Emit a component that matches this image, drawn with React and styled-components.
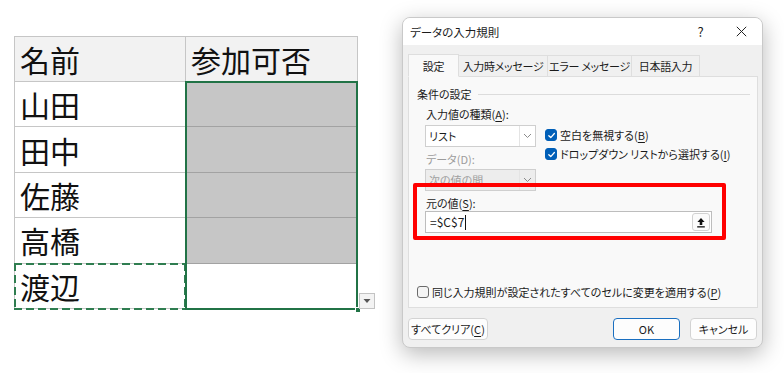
import React from "react";
import styled, { createGlobalStyle } from "styled-components";

const GlobalStyle = createGlobalStyle`
    html, body {
        margin: 0;
        padding: 0;
        background: #ffffff;
    }
    body {
        font-family: "Noto Sans CJK JP", "Noto Sans", sans-serif;
        color: #1a1a1a;
    }
    * {
        box-sizing: border-box;
    }
`

const Page = styled.div`
    display: flex;
    align-items: flex-start;
    width: 784px;
    height: 373px;
    overflow: hidden;
`

/* ---------- spreadsheet ---------- */

const Sheet = styled.div`
    position: relative;
    margin: 36px 0 0 14px;
    display: grid;
    grid-template-columns: 171px 172px;
    grid-template-rows: 45px repeat(5, 45.4px);
    border-top: 1px solid #c6c6c6;
    border-left: 1px solid #c6c6c6;
`

const Cell = styled.div`
    display: flex;
    align-items: center;
    padding-left: 5px;
    font-size: 30px;
    line-height: 1;
    color: #111;
    background: ${p => p.$head ? "#f2f2f2" : p.$shade ? "#c6c6c6" : "#ffffff"};
    border-right: 1px solid #c6c6c6;
    border-bottom: 1px solid ${p => p.$shade ? "#a2a2a2" : "#c6c6c6"};
`

const Selection = styled.div`
    position: absolute;
    left: 170px;
    top: 44px;
    width: 173px;
    height: 229px;
    border: 2px solid #217346;
    pointer-events: none;
`

const Handle = styled.div`
    position: absolute;
    right: -5px;
    bottom: -5px;
    width: 6px;
    height: 6px;
    background: #217346;
    border: 1px solid #ffffff;
`

const CopyMarquee = styled.div`
    position: absolute;
    left: -1px;
    top: 226px;
    width: 172px;
    height: 47px;
    pointer-events: none;
    background:
        repeating-linear-gradient(90deg, #2f7d50 0 8px, transparent 8px 12px) top / 100% 2px no-repeat,
        repeating-linear-gradient(90deg, #2f7d50 0 8px, transparent 8px 12px) bottom / 100% 2px no-repeat,
        repeating-linear-gradient(180deg, #2f7d50 0 8px, transparent 8px 12px) left / 2px 100% no-repeat,
        repeating-linear-gradient(180deg, #2f7d50 0 8px, transparent 8px 12px) right / 2px 100% no-repeat;
`

const ListButton = styled.div`
    position: absolute;
    left: 344px;
    top: 256px;
    width: 16px;
    height: 16px;
    display: flex;
    align-items: center;
    justify-content: center;
    background: #f3f3f3;
    border: 1px solid #c3c3c3;
`

/* ---------- dialog ---------- */

const Dialog = styled.div`
    margin: 17px 0 0 44px;
    width: 361px;
    height: 331px;
    display: flex;
    flex-direction: column;
    background: #f0f0f0;
    border: 1px solid #c9c9c9;
    border-radius: 8px;
    overflow: hidden;
    box-shadow: 0 6px 22px rgba(0, 0, 0, 0.28);
    font-size: 11px;
    font-feature-settings: "palt";
    line-height: 14px;
    color: #1b1b1b;
    white-space: nowrap;

    u {
        text-underline-offset: 2px;
    }
`

const TitleBar = styled.div`
    height: 27px;
    flex: none;
    display: flex;
    align-items: center;
    padding-left: 7px;
    background: #ffffff;
    font-size: 11.5px;
`

const TitleText = styled.span`
    flex: 1;
`

const TitleButton = styled.span`
    width: 41px;
    display: flex;
    align-items: center;
    justify-content: center;
    font-size: 13px;
`

const Body = styled.div`
    flex: 1;
    display: flex;
    flex-direction: column;
    padding: 10px 5px 0 5px;
`

const TabRow = styled.div`
    display: flex;
    height: 21px;
    align-items: flex-end;
`

const Tab = styled.div`
    height: ${p => p.$active ? "23px" : "21px"};
    width: ${p => p.$w}px;
    display: flex;
    align-items: center;
    justify-content: center;
    letter-spacing: -0.3px;
    background: ${p => p.$active ? "#f9f9f9" : "#f0f0f0"};
    border: 1px solid #dedede;
    border-bottom: ${p => p.$active ? "1px solid #f9f9f9" : "none"};
    margin-right: -1px;
    position: relative;
    z-index: ${p => p.$active ? 2 : 1};
    margin-bottom: ${p => p.$active ? "-1px" : "0"};
`

const Panel = styled.div`
    position: relative;
    height: 232px;
    width: 350px;
    display: flex;
    flex-direction: column;
    padding: 10px 0 8px 8px;
    background: #f9f9f9;
    border: 1px solid #dedede;
`

const Legend = styled.div`
    display: flex;
    align-items: center;
    gap: 6px;
    padding-right: 7px;

    &::after {
        content: "";
        flex: 1;
        height: 1px;
        background: #dcdcdc;
    }
`

const Group = styled.div`
    display: flex;
    flex-direction: column;
    padding-left: 8px;
`

const Label = styled.div`
    margin-top: ${p => p.$mt}px;
    color: ${p => p.$disabled ? "#9c9c9c" : "#1b1b1b"};
    padding-left: 1px;
`

const Row = styled.div`
    display: flex;
    align-items: flex-start;
    margin-top: 4px;
    gap: 9px;
`

const Select = styled.div`
    width: 111px;
    height: 22px;
    display: flex;
    align-items: center;
    background: ${p => p.$disabled ? "#ededed" : "#ffffff"};
    color: ${p => p.$disabled ? "#a0a0a0" : "#1b1b1b"};
    border: 1px solid #cfcfcf;
    margin-top: ${p => p.$mt || 0}px;
`

const SelectText = styled.span`
    flex: 1;
    padding-left: 3px;
`

const Chevron = styled.span`
    width: 16px;
    height: 100%;
    display: flex;
    align-items: center;
    justify-content: center;
    border-left: 1px solid #e4e4e4;
`

const Checks = styled.div`
    display: flex;
    flex-direction: column;
    gap: 5px;
    padding-top: 3px;
`

const CheckRow = styled.label`
    display: flex;
    align-items: center;
    gap: 3px;
`

const Box = styled.span`
    width: 12px;
    height: 12px;
    flex: none;
    display: flex;
    align-items: center;
    justify-content: center;
    border-radius: 3px;
    background: ${p => p.$checked ? "#005fb8" : "#f4f4f4"};
    border: 1px solid ${p => p.$checked ? "#005fb8" : "#6b6b6b"};
`

const SourceInput = styled.div`
    margin-top: 1px;
    width: 287px;
    height: 22px;
    display: flex;
    align-items: center;
    padding: 0 1px 0 4px;
    background: #ffffff;
    border: 1px solid #bdbdbd;
    font-size: 12px;
`

const Caret = styled.span`
    width: 1px;
    height: 15px;
    margin-left: 1px;
    background: #111;
`

const Grow = styled.span`
    flex: 1;
`

const RefButton = styled.span`
    width: 18px;
    height: 18px;
    display: flex;
    align-items: center;
    justify-content: center;
    background: #fbfbfb;
    border: 1px solid #d2d2d2;
    border-radius: 3px;
`

const RedMark = styled.div`
    position: absolute;
    left: 4px;
    top: 106px;
    width: 313px;
    height: 57px;
    border: 4px solid #ff0000;
    border-radius: 2px;
    pointer-events: none;
`

const Footer = styled.div`
    display: flex;
    align-items: center;
    margin-top: 10px;
    gap: 10px;
`

const Button = styled.div`
    height: 22px;
    width: ${p => p.$w}px;
    display: flex;
    align-items: center;
    justify-content: center;
    background: #fdfdfd;
    border: 1px solid ${p => p.$primary ? "#1a6fc0" : "#d3d3d3"};
    border-radius: 4px;
    margin-left: ${p => p.$push ? "auto" : "0"};
`

const Check = () => (
    <svg width="9" height="9" viewBox="0 0 10 10">
        <path d="M2 5.2 L4.2 7.3 L8.2 2.8" fill="none" stroke="#fff" strokeWidth="1.4" strokeLinecap="round" strokeLinejoin="round" />
    </svg>
)

const ChevronIcon = () => (
    <svg width="9" height="6" viewBox="0 0 9 6">
        <path d="M1 1 L4.5 4.5 L8 1" fill="none" stroke="#8a8a8a" strokeWidth="1" />
    </svg>
)

export default function App() {
    const names = ["山田", "田中", "佐藤", "高橋", "渡辺"];
    const tabs = [
        { label: "設定", w: 51, active: true },
        { label: "入力時メッセージ", w: 90 },
        { label: "エラー メッセージ", w: 85 },
        { label: "日本語入力", w: 69 },
    ];

    return (
        <Page>
            <GlobalStyle />
            <Sheet>
                <Cell $head>名前</Cell>
                <Cell $head>参加可否</Cell>
                {names.map((n, i) => (
                    <React.Fragment key={n}>
                        <Cell>{n}</Cell>
                        <Cell $shade={i < 4} />
                    </React.Fragment>
                ))}
                <CopyMarquee />
                <Selection>
                    <Handle />
                </Selection>
                <ListButton>
                    <svg width="8" height="6" viewBox="0 0 8 6">
                        <path d="M0.5 1 H7.5 L4 5 Z" fill="#555" />
                    </svg>
                </ListButton>
            </Sheet>

            <Dialog>
                <TitleBar>
                    <TitleText>データの入力規則</TitleText>
                    <TitleButton>?</TitleButton>
                    <TitleButton>
                        <svg width="11" height="11" viewBox="0 0 11 11">
                            <path d="M0.8 0.8 L10.2 10.2 M10.2 0.8 L0.8 10.2" stroke="#222" strokeWidth="1" />
                        </svg>
                    </TitleButton>
                </TitleBar>
                <Body>
                    <TabRow>
                        {tabs.map(t => (
                            <Tab key={t.label} $w={t.w} $active={t.active}>{t.label}</Tab>
                        ))}
                    </TabRow>
                    <Panel>
                        <Legend>条件の設定</Legend>
                        <Group>
                            <Label $mt={6}>入力値の種類(<u>A</u>):</Label>
                            <Row>
                                <div>
                                    <Select>
                                        <SelectText>リスト</SelectText>
                                        <Chevron><ChevronIcon /></Chevron>
                                    </Select>
                                    <Label $mt={5} $disabled>データ(D):</Label>
                                    <Select $mt={3} $disabled>
                                        <SelectText>次の値の間</SelectText>
                                        <Chevron><ChevronIcon /></Chevron>
                                    </Select>
                                </div>
                                <Checks>
                                    <CheckRow>
                                        <Box $checked><Check /></Box>
                                        <span>空白を無視する(<u>B</u>)</span>
                                    </CheckRow>
                                    <CheckRow>
                                        <Box $checked><Check /></Box>
                                        <span>ドロップダウン リストから選択する(<u>I</u>)</span>
                                    </CheckRow>
                                </Checks>
                            </Row>
                            <Label $mt={5}>元の値(<u>S</u>):</Label>
                            <SourceInput>
                                <span>=$C$7</span>
                                <Caret />
                                <Grow />
                                <RefButton>
                                    <svg width="10" height="11" viewBox="0 0 10 11">
                                        <path d="M5 1 L8.6 5 H6.3 V8 H3.7 V5 H1.4 Z" fill="#111" />
                                        <rect x="1.2" y="9.2" width="7.6" height="1.3" fill="#111" />
                                    </svg>
                                </RefButton>
                            </SourceInput>
                        </Group>
                        <Grow />
                        <CheckRow>
                            <Box />
                            <span>同じ入力規則が設定されたすべてのセルに変更を適用する(<u>P</u>)</span>
                        </CheckRow>
                        <RedMark />
                    </Panel>
                    <Footer>
                        <Button $w={80}><span>すべてクリア(<u>C</u>)</span></Button>
                        <Button $w={67} $primary $push>OK</Button>
                        <Button $w={67}>キャンセル</Button>
                    </Footer>
                </Body>
            </Dialog>
        </Page>
    );
}
